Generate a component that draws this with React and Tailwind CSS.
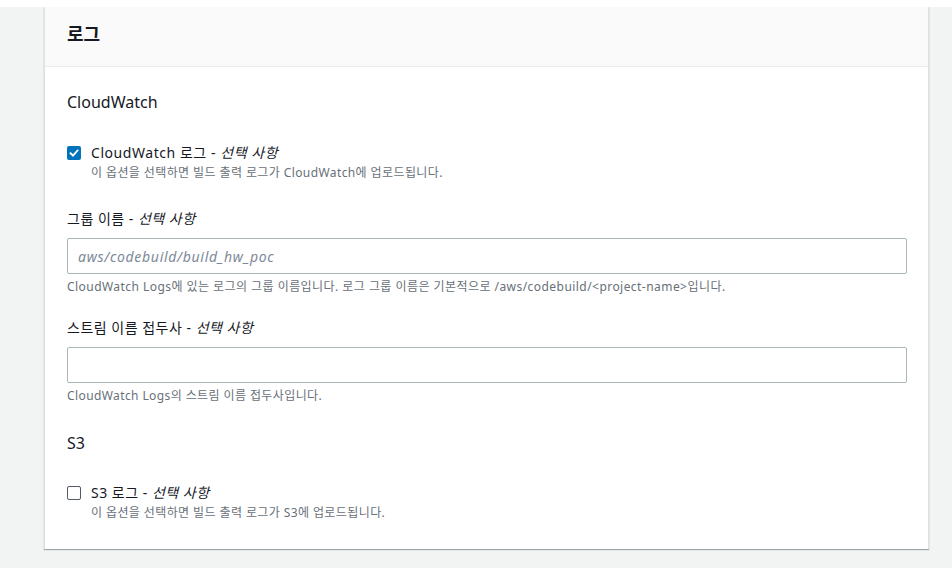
import React, { useState } from 'react';

const font = { fontFamily: '"Noto Sans", "Noto Sans CJK KR", sans-serif' };

const Checkbox = ({ checked, onChange }) => (
  <button
    type="button"
    onClick={onChange}
    className={`mt-[3px] w-[14px] h-[14px] shrink-0 rounded-[2px] flex items-center justify-center ${
      checked ? 'bg-[#0073bb]' : 'bg-white border-[1.5px] border-[#545b64]'
    }`}
  >
    {checked && (
      <svg width="10" height="10" viewBox="0 0 10 10" fill="none">
        <path d="M1.5 5.2 L4 7.6 L8.6 2.4" stroke="white" strokeWidth="1.8" strokeLinecap="square" />
      </svg>
    )}
  </button>
);

const Optional = () => (
  <>
    {' - '}
    <i className="italic">선택 사항</i>
  </>
);

const App = () => {
  const [cw, setCw] = useState(true);
  const [s3, setS3] = useState(false);

  return (
    <div className="min-h-screen bg-[#f2f3f3] text-[#16191f]" style={font}>
      <div className="h-[7px] bg-white" />
      <div className="ml-[44px] w-[885px] bg-white border-x border-[#dde1e1] shadow-[0_1px_1px_0_rgba(0,28,36,0.35)]">
        <div className="h-[60px] bg-[#fafafa] border-b border-[#eaeded] px-[22px] pt-[16px]">
          <h2 className="text-[18px] leading-[22px] font-bold">로그</h2>
        </div>

        <div className="px-[22px] pt-[24px] pb-[28px]">
          <h3 className="text-[16px] leading-[22px]">CloudWatch</h3>

          <div className="mt-[30px] flex gap-[10px]">
            <Checkbox checked={cw} onChange={() => setCw(!cw)} />
            <div>
              <div className="text-[14px] leading-[20px] tracking-[0.55px]">
                CloudWatch 로그<Optional />
              </div>
              <div className="mt-[2px] text-[12px] leading-[16px] tracking-[0.4px] text-[#687078]">
                이 옵션을 선택하면 빌드 출력 로그가 CloudWatch에 업로드됩니다.
              </div>
            </div>
          </div>

          <div className="mt-[28px] text-[14px] leading-[20px] tracking-[0.5px]">
            그룹 이름<Optional />
          </div>
          <input
            className="mt-[9px] block w-[840px] h-[36px] border border-[#aab7b8] rounded-[2px] px-[10px] text-[14px] tracking-[0.7px] italic placeholder:text-[#7d8998] outline-none"
            placeholder="aws/codebuild/build_hw_poc"
          />
          <div className="mt-[5px] text-[12px] leading-[16px] tracking-[0.45px] text-[#687078]">
            CloudWatch Logs에 있는 로그의 그룹 이름입니다. 로그 그룹 이름은 기본적으로 /aws/codebuild/&lt;project-name&gt;입니다.
          </div>

          <div className="mt-[23px] text-[14px] leading-[20px] tracking-[0.5px]">
            스트림 이름 접두사<Optional />
          </div>
          <input className="mt-[9px] block w-[840px] h-[36px] border border-[#aab7b8] rounded-[2px] px-[10px] text-[14px] outline-none" />
          <div className="mt-[5px] text-[12px] leading-[16px] tracking-[0.4px] text-[#687078]">
            CloudWatch Logs의 스트림 이름 접두사입니다.
          </div>

          <h3 className="mt-[28px] text-[16px] leading-[22px]">S3</h3>

          <div className="mt-[29px] flex gap-[10px]">
            <Checkbox checked={s3} onChange={() => setS3(!s3)} />
            <div>
              <div className="text-[14px] leading-[20px] tracking-[0.5px]">
                S3 로그<Optional />
              </div>
              <div className="mt-[2px] text-[12px] leading-[16px] tracking-[0.4px] text-[#687078]">
                이 옵션을 선택하면 빌드 출력 로그가 S3에 업로드됩니다.
              </div>
            </div>
          </div>
        </div>
      </div>
    </div>
  );
};

export default App;
